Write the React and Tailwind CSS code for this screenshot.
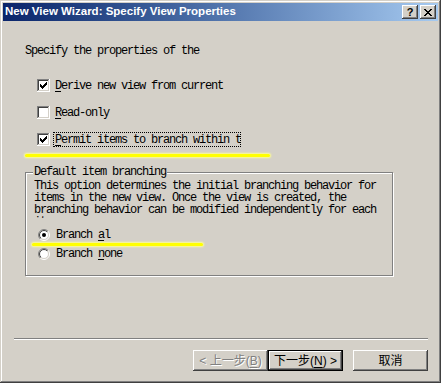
import React from 'react';

const mono = "[font-family:'Liberation_Mono','Courier_New',monospace] text-[12px] leading-[12px] tracking-[-1.2px] text-black whitespace-nowrap";
const sans = "[font-family:'Liberation_Sans',Arial,sans-serif]";
const raised = "shadow-[inset_-1px_-1px_0_#404040,inset_1px_1px_0_#ffffff,inset_-2px_-2px_0_#808080,inset_2px_2px_0_#d4d0c8]";
const cjk = "[font-family:'Liberation_Sans','Noto_Sans_CJK_SC',sans-serif] text-[12px] leading-none";

const checkCols = [[3, 5], [4, 6], [5, 7], [6, 6], [7, 5], [8, 4], [9, 3]];

function CheckBox({ checked }) {
    return (
        <svg width="13" height="13" viewBox="0 0 13 13" shapeRendering="crispEdges" className="shrink-0">
            <rect x="0" y="0" width="13" height="13" fill="#ffffff" />
            <rect x="0" y="0" width="12" height="12" fill="#808080" />
            <rect x="1" y="1" width="11" height="11" fill="#d4d0c8" />
            <rect x="1" y="1" width="10" height="10" fill="#404040" />
            <rect x="2" y="2" width="9" height="9" fill="#ffffff" />
            {checked && checkCols.map(([x, y]) => <rect key={x} x={x} y={y} width="1" height="3" fill="#000000" />)}
        </svg>
    );
}

function Radio({ checked, id }) {
    return (
        <svg width="12" height="12" viewBox="0 0 12 12" className="shrink-0">
            <defs>
                <linearGradient id={id + 'o'} x1="0" y1="0" x2="1" y2="1">
                    <stop offset="0.5" stopColor="#808080" />
                    <stop offset="0.5" stopColor="#ffffff" />
                </linearGradient>
                <linearGradient id={id + 'i'} x1="0" y1="0" x2="1" y2="1">
                    <stop offset="0.5" stopColor="#404040" />
                    <stop offset="0.5" stopColor="#d4d0c8" />
                </linearGradient>
            </defs>
            <circle cx="6" cy="6" r="5.5" fill="none" stroke={`url(#${id}o)`} />
            <circle cx="6" cy="6" r="4.5" fill="#ffffff" stroke={`url(#${id}i)`} />
            {checked && <circle cx="6" cy="6" r="2" fill="#000000" />}
        </svg>
    );
}

// pixel X of the classic close button
const xPixels = [[0, 0], [6, 0], [1, 1], [5, 1], [2, 2], [4, 2], [3, 3], [2, 4], [4, 4], [1, 5], [5, 5], [0, 6], [6, 6]];

const TitleBtn = ({ children }) => (
    <div className={`w-[16px] h-[14px] bg-[#d4d0c8] flex items-center justify-center ${raised}`}>{children}</div>
);

const CheckRow = ({ checked, focus, children }) => (
    <div className="h-[15px] flex items-center">
        <CheckBox checked={checked} />
        <span className={`ml-[3px] h-[15px] pl-[1px] flex items-center border ${focus ? 'border-dotted border-black w-[188px] overflow-hidden' : 'border-transparent'} ${mono}`}>
            {children}
        </span>
    </div>
);

const U = ({ children }) => <span className="underline underline-offset-[2px]">{children}</span>;

export default function App() {
    return (
        <div className="w-[441px] h-[383px] bg-[#d4d0c8] p-[3px] flex flex-col select-none shadow-[inset_-1px_-1px_0_#404040,inset_1px_1px_0_#d4d0c8,inset_-2px_-2px_0_#808080,inset_2px_2px_0_#ffffff]">
            {/* title bar */}
            <div className="h-[18px] shrink-0 flex items-center bg-linear-to-r from-[#0a246a] to-[#a6caf0] pl-[2px] pr-[2px]">
                <span className={`${sans} font-bold text-[11.5px] leading-none text-white`}>New View Wizard: Specify View Properties</span>
                <div className="ml-auto flex gap-[2px]">
                    <TitleBtn><span className={`${sans} font-bold text-[11px] leading-none text-black`}>?</span></TitleBtn>
                    <TitleBtn>
                        <svg width="8" height="7" viewBox="0 0 8 7" shapeRendering="crispEdges">
                            {xPixels.map(([x, y]) => <rect key={`${x}-${y}`} x={x} y={y} width="2" height="1" fill="#000000" />)}
                        </svg>
                    </TitleBtn>
                </div>
            </div>

            <div className="flex-1 flex flex-col">
                <div className={`${mono} mt-[24px] ml-[22px]`}>Specify the properties of the</div>

                <div className="mt-[21px] ml-[34px] flex flex-col gap-[12px]">
                    <CheckRow checked><U>D</U>erive new view from current</CheckRow>
                    <CheckRow><U>R</U>ead-only</CheckRow>
                    <CheckRow checked focus><U>P</U>ermit items to branch within the view</CheckRow>
                </div>

                <div className="mt-[7px] ml-[22px] w-[245px] h-[3px] rounded-full bg-[#ffff00] shadow-[0_0_2px_1px_#ffff90]" />

                {/* group box */}
                <div className="relative mt-[15px] ml-[22px] w-[368px] h-[104px] shrink-0 border border-[#808080] shadow-[1px_1px_0_#ffffff,inset_1px_1px_0_#ffffff] flex flex-col">
                    <span className={`absolute left-[7px] top-[-7px] px-[1px] bg-[#d4d0c8] ${mono}`}>Default item branching</span>
                    <div className={`mt-[7px] ml-[8px] h-[38px] overflow-hidden ${mono}`}>
                        <div>This option determines the initial branching behavior for</div>
                        <div>items in the new view. Once the view is created, the</div>
                        <div>branching behavior can be modified independently for each</div>
                        <div>item.</div>
                    </div>
                    <div className="mt-[9px] ml-[12px] h-[15px] flex items-center">
                        <Radio checked id="r1" />
                        <span className={`ml-[6px] ${mono}`}>Branch <U>a</U>l</span>
                    </div>
                    <div className="mt-[1px] ml-[6px] w-[171px] h-[3px] rounded-full bg-[#ffff00] shadow-[0_0_2px_1px_#ffff90]" />
                    <div className="ml-[12px] h-[15px] flex items-center">
                        <Radio id="r2" />
                        <span className={`ml-[6px] ${mono}`}>Branch <U>n</U>one</span>
                    </div>
                </div>

                {/* separator */}
                <div className="mt-[62px] ml-[11px] w-[414px] h-[2px] border-t border-b border-t-[#808080] border-b-white" />

                {/* buttons */}
                <div className="mt-[10px] pr-[10px] flex justify-end">
                    <div className={`w-[75px] h-[21px] flex items-center justify-center bg-[#d4d0c8] ${raised}`}>
                        <span className={`${cjk} text-[#808080] [text-shadow:1px_1px_0_#ffffff]`}>&lt; 上一步(<U>B</U>)</span>
                    </div>
                    <div className={`w-[75px] h-[21px] flex items-center justify-center bg-[#d4d0c8] border border-black ${raised}`}>
                        <span className={`${cjk} text-black`}>下一步(<U>N</U>) &gt;</span>
                    </div>
                    <div className={`ml-[10px] w-[75px] h-[21px] flex items-center justify-center bg-[#d4d0c8] ${raised}`}>
                        <span className={`${cjk} text-black`}>取消</span>
                    </div>
                </div>
            </div>
        </div>
    );
}
